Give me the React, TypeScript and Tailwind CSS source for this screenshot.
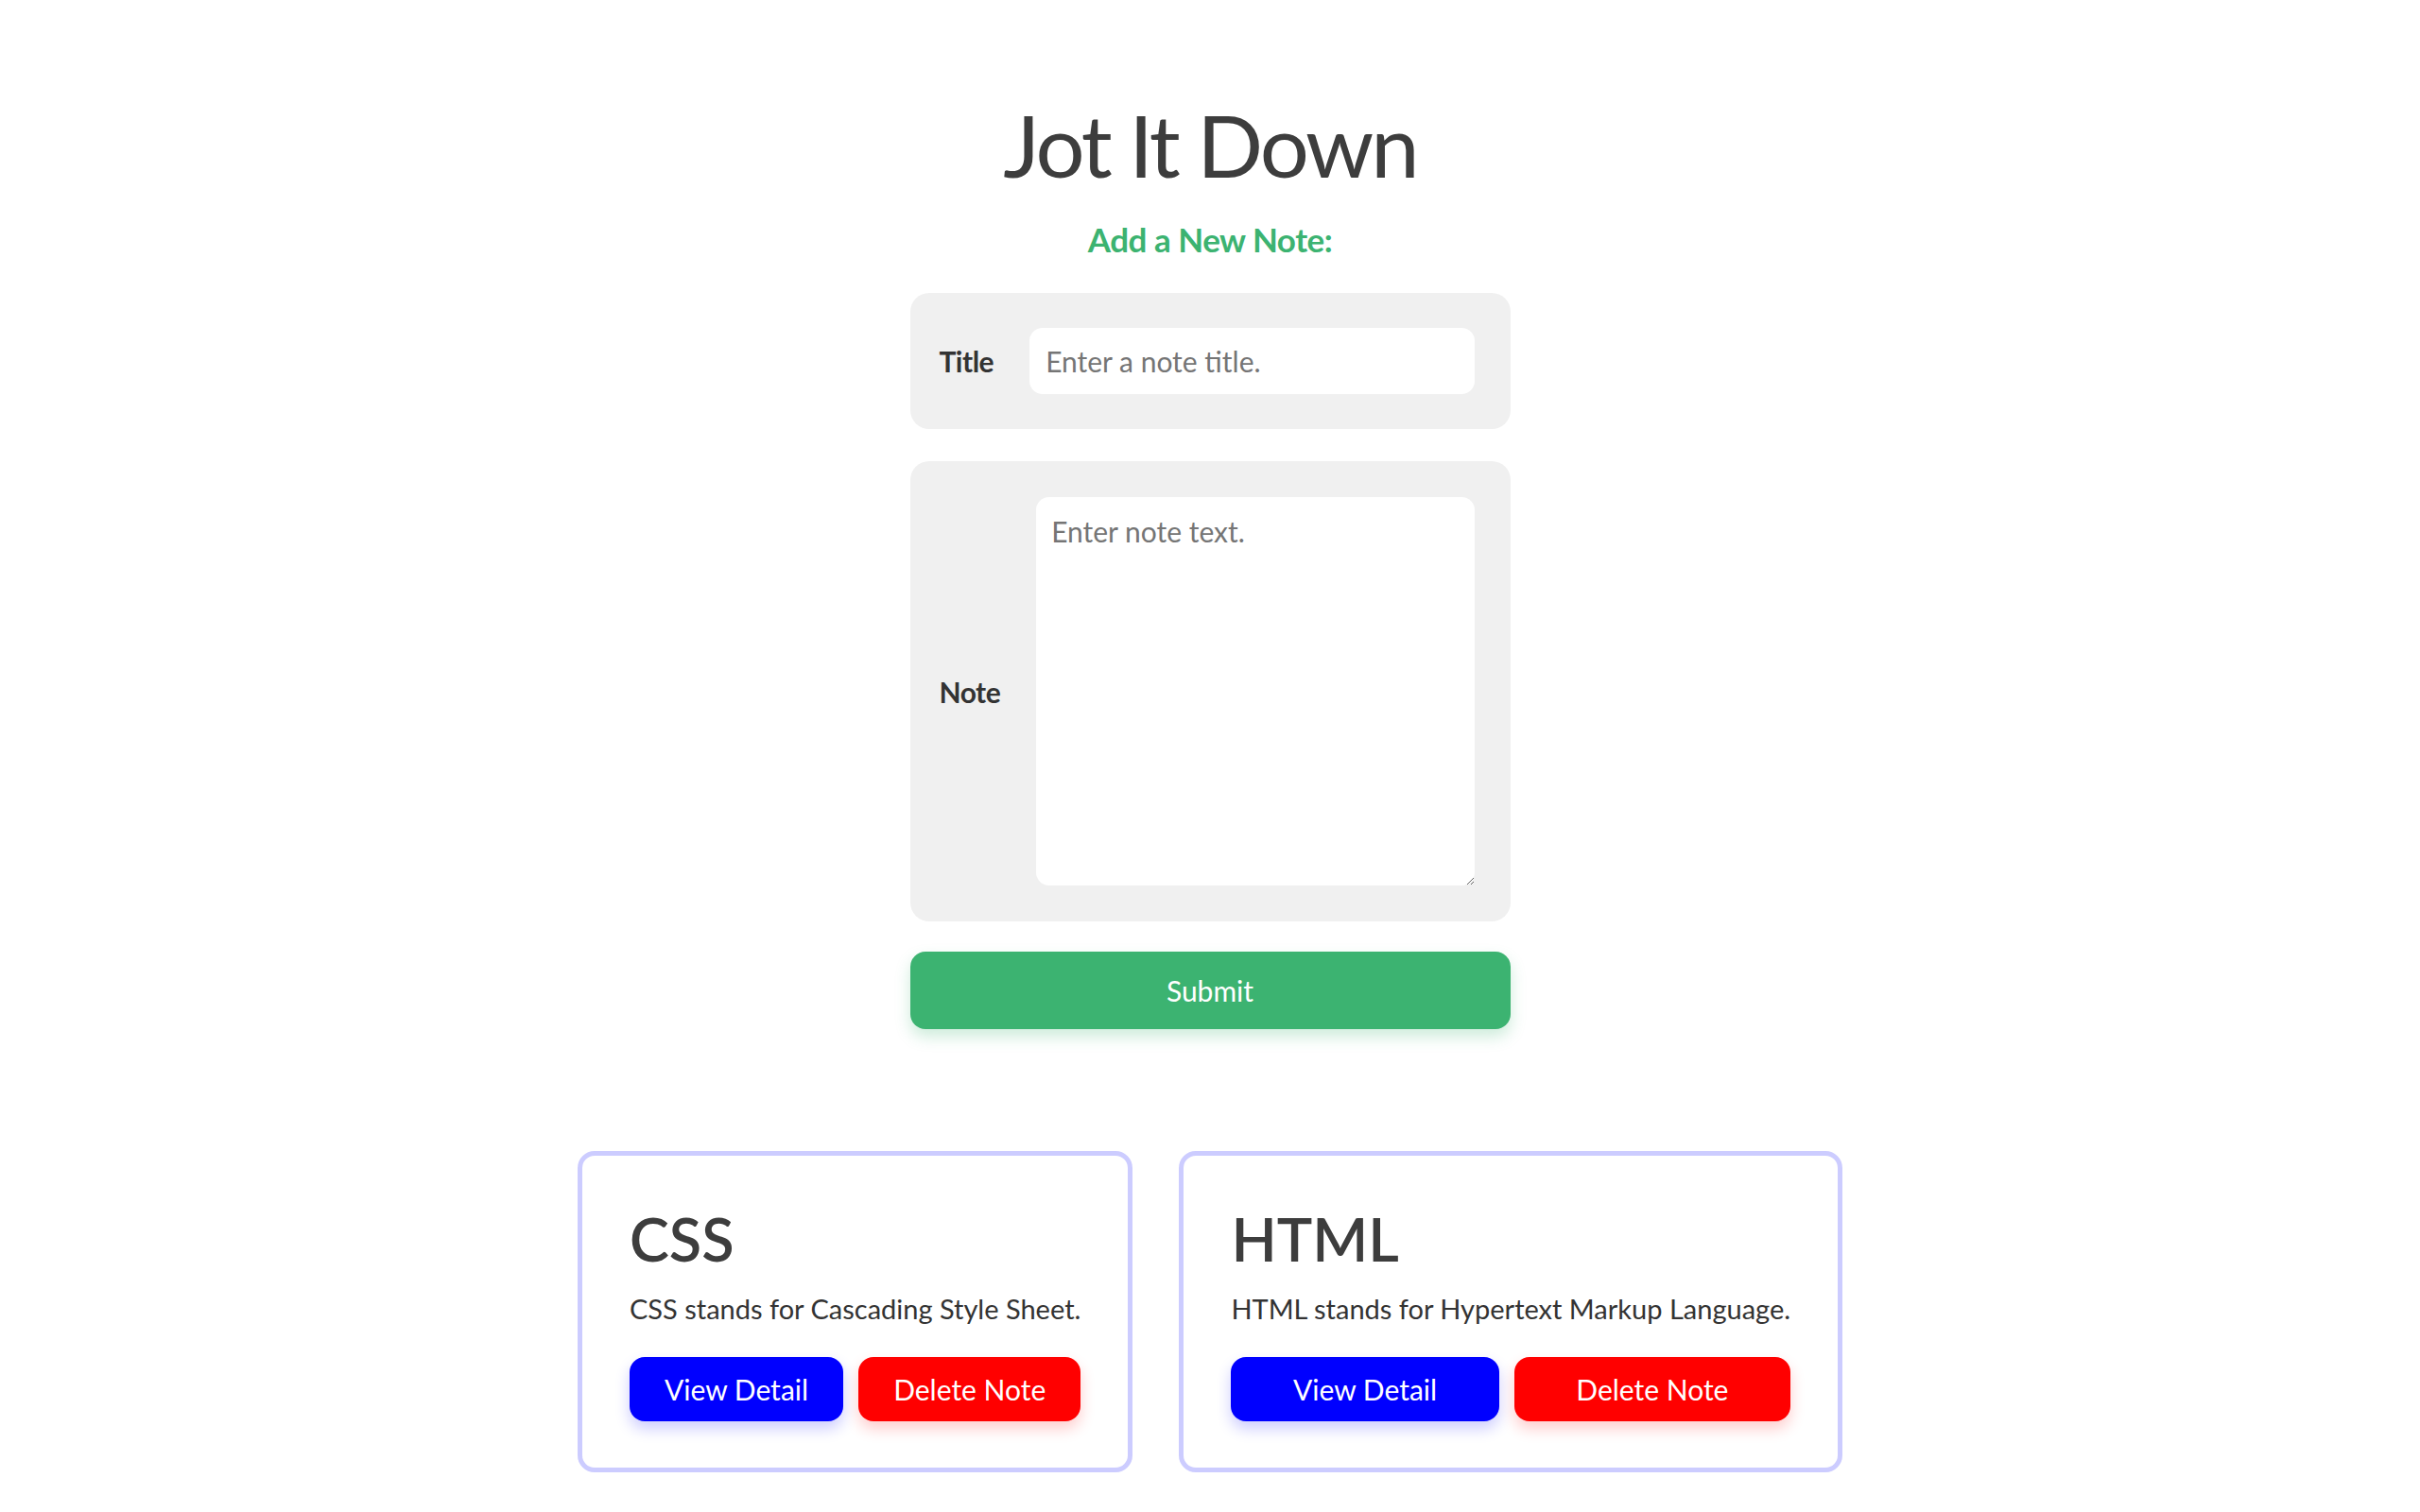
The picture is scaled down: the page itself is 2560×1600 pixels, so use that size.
import React from "react";

const notes = [
  { title: "CSS", text: "CSS stands for Cascading Style Sheet." },
  { title: "HTML", text: "HTML stands for Hypertext Markup Language." },
];

export default function App() {
  return (
    <div
      className="min-h-screen w-full bg-white flex flex-col items-center"
      style={{ fontFamily: "Lato, 'Open Sans', sans-serif" }}
    >
      <h1 className="mt-[107px] text-[92px] leading-none font-normal tracking-[-3px] text-[#3d3d3d]">
        Jot It Down
      </h1>
      <h2 className="mt-[37px] text-[35px] leading-none font-bold tracking-[-0.5px] text-[#3cb371]">
        Add a New Note:
      </h2>

      <form className="mt-[39px] w-[635px] flex flex-col" onSubmit={(e) => e.preventDefault()}>
        <div className="flex items-center bg-[#f0f0f0] rounded-[20px] pl-[31px] pr-[38px] py-[37px]">
          <label className="text-[30px] font-bold tracking-[-0.5px] text-[#333333] leading-none">Title</label>
          <input
            className="ml-[38px] flex-1 h-[70px] rounded-[14px] bg-white px-[17px] text-[30px] text-[#333] placeholder:text-[#757575] outline-none"
            placeholder="Enter a note title."
          />
        </div>
        <div className="mt-[34px] flex items-center bg-[#f0f0f0] rounded-[20px] pl-[31px] pr-[38px] py-[38px]">
          <label className="text-[30px] font-bold tracking-[-0.5px] text-[#333333] leading-none">Note</label>
          <textarea
            className="ml-[38px] flex-1 h-[411px] rounded-[14px] bg-white px-[16px] py-[14px] text-[30px] text-[#333] placeholder:text-[#757575] outline-none"
            placeholder="Enter note text."
          />
        </div>
        <button
          type="submit"
          className="mt-[32px] h-[82px] w-full rounded-[16px] bg-[#3cb371] text-white text-[30px] shadow-[0_8px_16px_rgba(60,179,113,0.25)]"
        >
          Submit
        </button>
      </form>

      <div className="mt-[129px] mb-[40px] flex flex-wrap justify-center gap-[49px]">
        {notes.map((n) => (
          <div
            key={n.title}
            className="border-[5px] border-[#ccccff] rounded-[18px] px-[50px] pt-[56px] pb-[49px] flex flex-col"
          >
            <h3 className="text-[63px] leading-none font-semibold text-[#3d3d3d]">{n.title}</h3>
            <p className="mt-[28px] text-[29px] leading-none text-[#333333]">{n.text}</p>
            <div className="mt-[37px] flex gap-[16px]">
              <button className="flex-auto h-[68px] rounded-[16px] bg-[#0000ff] text-white text-[30px] px-[24px] shadow-[0_8px_16px_rgba(0,0,255,0.2)]">
                View Detail
              </button>
              <button className="flex-auto h-[68px] rounded-[16px] bg-[#ff0000] text-white text-[30px] px-[24px] shadow-[0_8px_16px_rgba(255,0,0,0.2)]">
                Delete Note
              </button>
            </div>
          </div>
        ))}
      </div>
    </div>
  );
}
